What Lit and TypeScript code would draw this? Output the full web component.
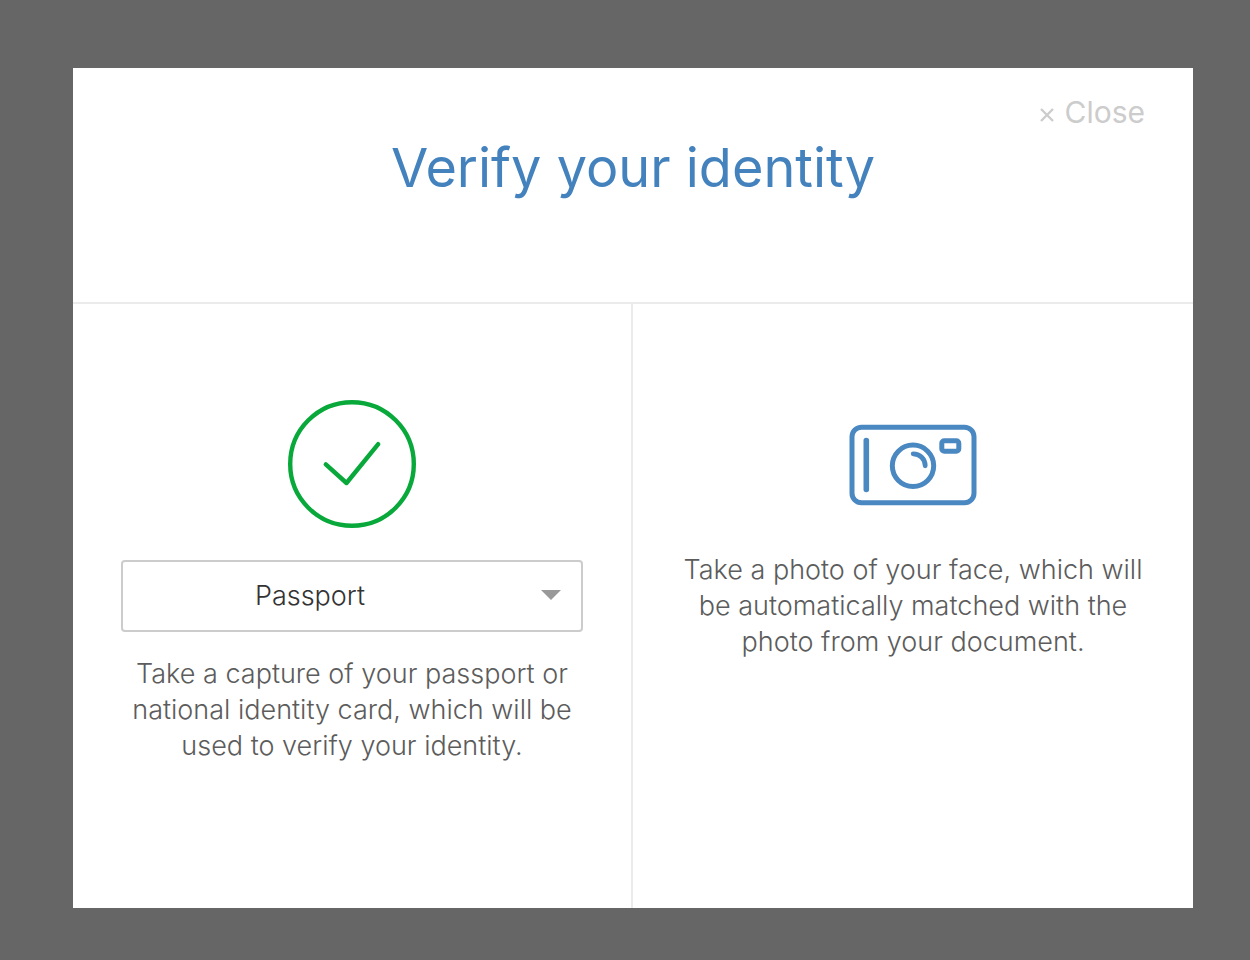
import { LitElement, html, css } from "lit";
import { customElement, state } from "lit/decorators.js";

@customElement("app-root")
export class AppRoot extends LitElement {
  static styles = css`
    :host {
      display: block;
      font-family: Inter, "Liberation Sans", sans-serif;
      font-size: 27px;
      font-weight: 300;
      line-height: 36px;
      color: #5c5c5c;
    }
    * {
      box-sizing: border-box;
    }
    .overlay {
      display: flex;
      min-height: 100vh;
      padding: 68px 57px 52px 73px;
      background: #666;
    }
    .dialog {
      display: flex;
      flex-direction: column;
      flex: 1;
      background: #fff;
    }
    .header {
      display: flex;
      flex-direction: column;
      gap: 10px;
      padding: 26px 48px 106px;
      border-bottom: 2px solid #ebebeb;
    }
    .close {
      display: flex;
      align-items: center;
      gap: 11px;
      align-self: flex-end;
      padding: 0;
      border: 0;
      background: none;
      color: #ccc;
      font: inherit;
      font-size: 30px;
      font-weight: 400;
      line-height: 36px;
      cursor: pointer;
    }
    .cross {
      width: 14px;
      height: 14px;
      margin-top: 6px;
    }
    .title {
      margin: 0;
      color: #4482be;
      font-size: 54px;
      font-weight: 400;
      line-height: 56px;
      text-align: center;
    }
    .steps {
      display: grid;
      grid-template-columns: 1fr 1fr;
      flex: 1;
    }
    .step {
      display: flex;
      flex-direction: column;
      align-items: center;
      gap: 24px;
      padding: 96px 48px;
      text-align: center;
    }
    .step:first-child {
      border-right: 2px solid #ebebeb;
    }
    .icon {
      display: block;
      width: 128px;
      height: 128px;
    }
    .field {
      position: relative;
      width: 100%;
      margin-top: 8px;
    }
    .select {
      display: block;
      width: 100%;
      height: 72px;
      padding: 0 84px 0 0;
      border: 2px solid #ccc;
      border-radius: 4px;
      background: #fff;
      color: #333;
      font: inherit;
      text-align: center;
      text-align-last: center;
      appearance: none;
    }
    .arrow {
      position: absolute;
      top: 30px;
      right: 22px;
      width: 20px;
      height: 10px;
      pointer-events: none;
    }
    .text {
      margin: 0;
    }
  `;

  @state() private documentType = "Passport";

  private pick(e: Event) {
    this.documentType = (e.target as HTMLSelectElement).value;
  }

  render() {
    return html`
      <div class="overlay">
        <section class="dialog" role="dialog" aria-labelledby="title">
          <header class="header">
            <button class="close" type="button">
              <svg class="cross" viewBox="0 0 14 14" aria-hidden="true">
                <path d="M1 1 13 13M13 1 1 13" stroke="currentColor" stroke-width="2.4" />
              </svg>
              Close
            </button>
            <h1 class="title" id="title">Verify your identity</h1>
          </header>
          <div class="steps">
            <div class="step">
              <svg class="icon" viewBox="0 0 128 128" fill="none" stroke="#08a83a" stroke-width="4.4" aria-hidden="true">
                <circle cx="64" cy="64" r="61.8" />
                <path d="M37.8 64.4 58.5 83 90.2 44.2" stroke-linecap="round" stroke-linejoin="round" />
              </svg>
              <div class="field">
                <select class="select" aria-label="Document type" .value=${this.documentType} @change=${this.pick}>
                  <option>Passport</option>
                </select>
                <svg class="arrow" viewBox="0 0 20 10" aria-hidden="true">
                  <path d="M0 0H20L10 10Z" fill="#999" />
                </svg>
              </div>
              <p class="text">
                Take a capture of your passport or national identity card, which will be used to verify your identity.
              </p>
            </div>
            <div class="step">
              <svg class="icon" viewBox="0 0 128 128" fill="none" stroke="#4a88c2" stroke-width="5" stroke-linecap="round" aria-hidden="true">
                <rect x="3" y="27.2" width="122" height="75.6" rx="9.5" />
                <path d="M17.3 40.5V89.5" stroke-width="5.6" />
                <circle cx="64" cy="65.8" r="20.7" />
                <path d="M64.2 53.8A12 12 0 0 1 76.2 65.8" stroke-width="4.8" />
                <rect x="92.8" y="40.8" width="17" height="10.4" rx="2.5" />
              </svg>
              <p class="text">
                Take a photo of your face, which will be automatically matched with the photo from your document.
              </p>
            </div>
          </div>
        </section>
      </div>
    `;
  }
}
